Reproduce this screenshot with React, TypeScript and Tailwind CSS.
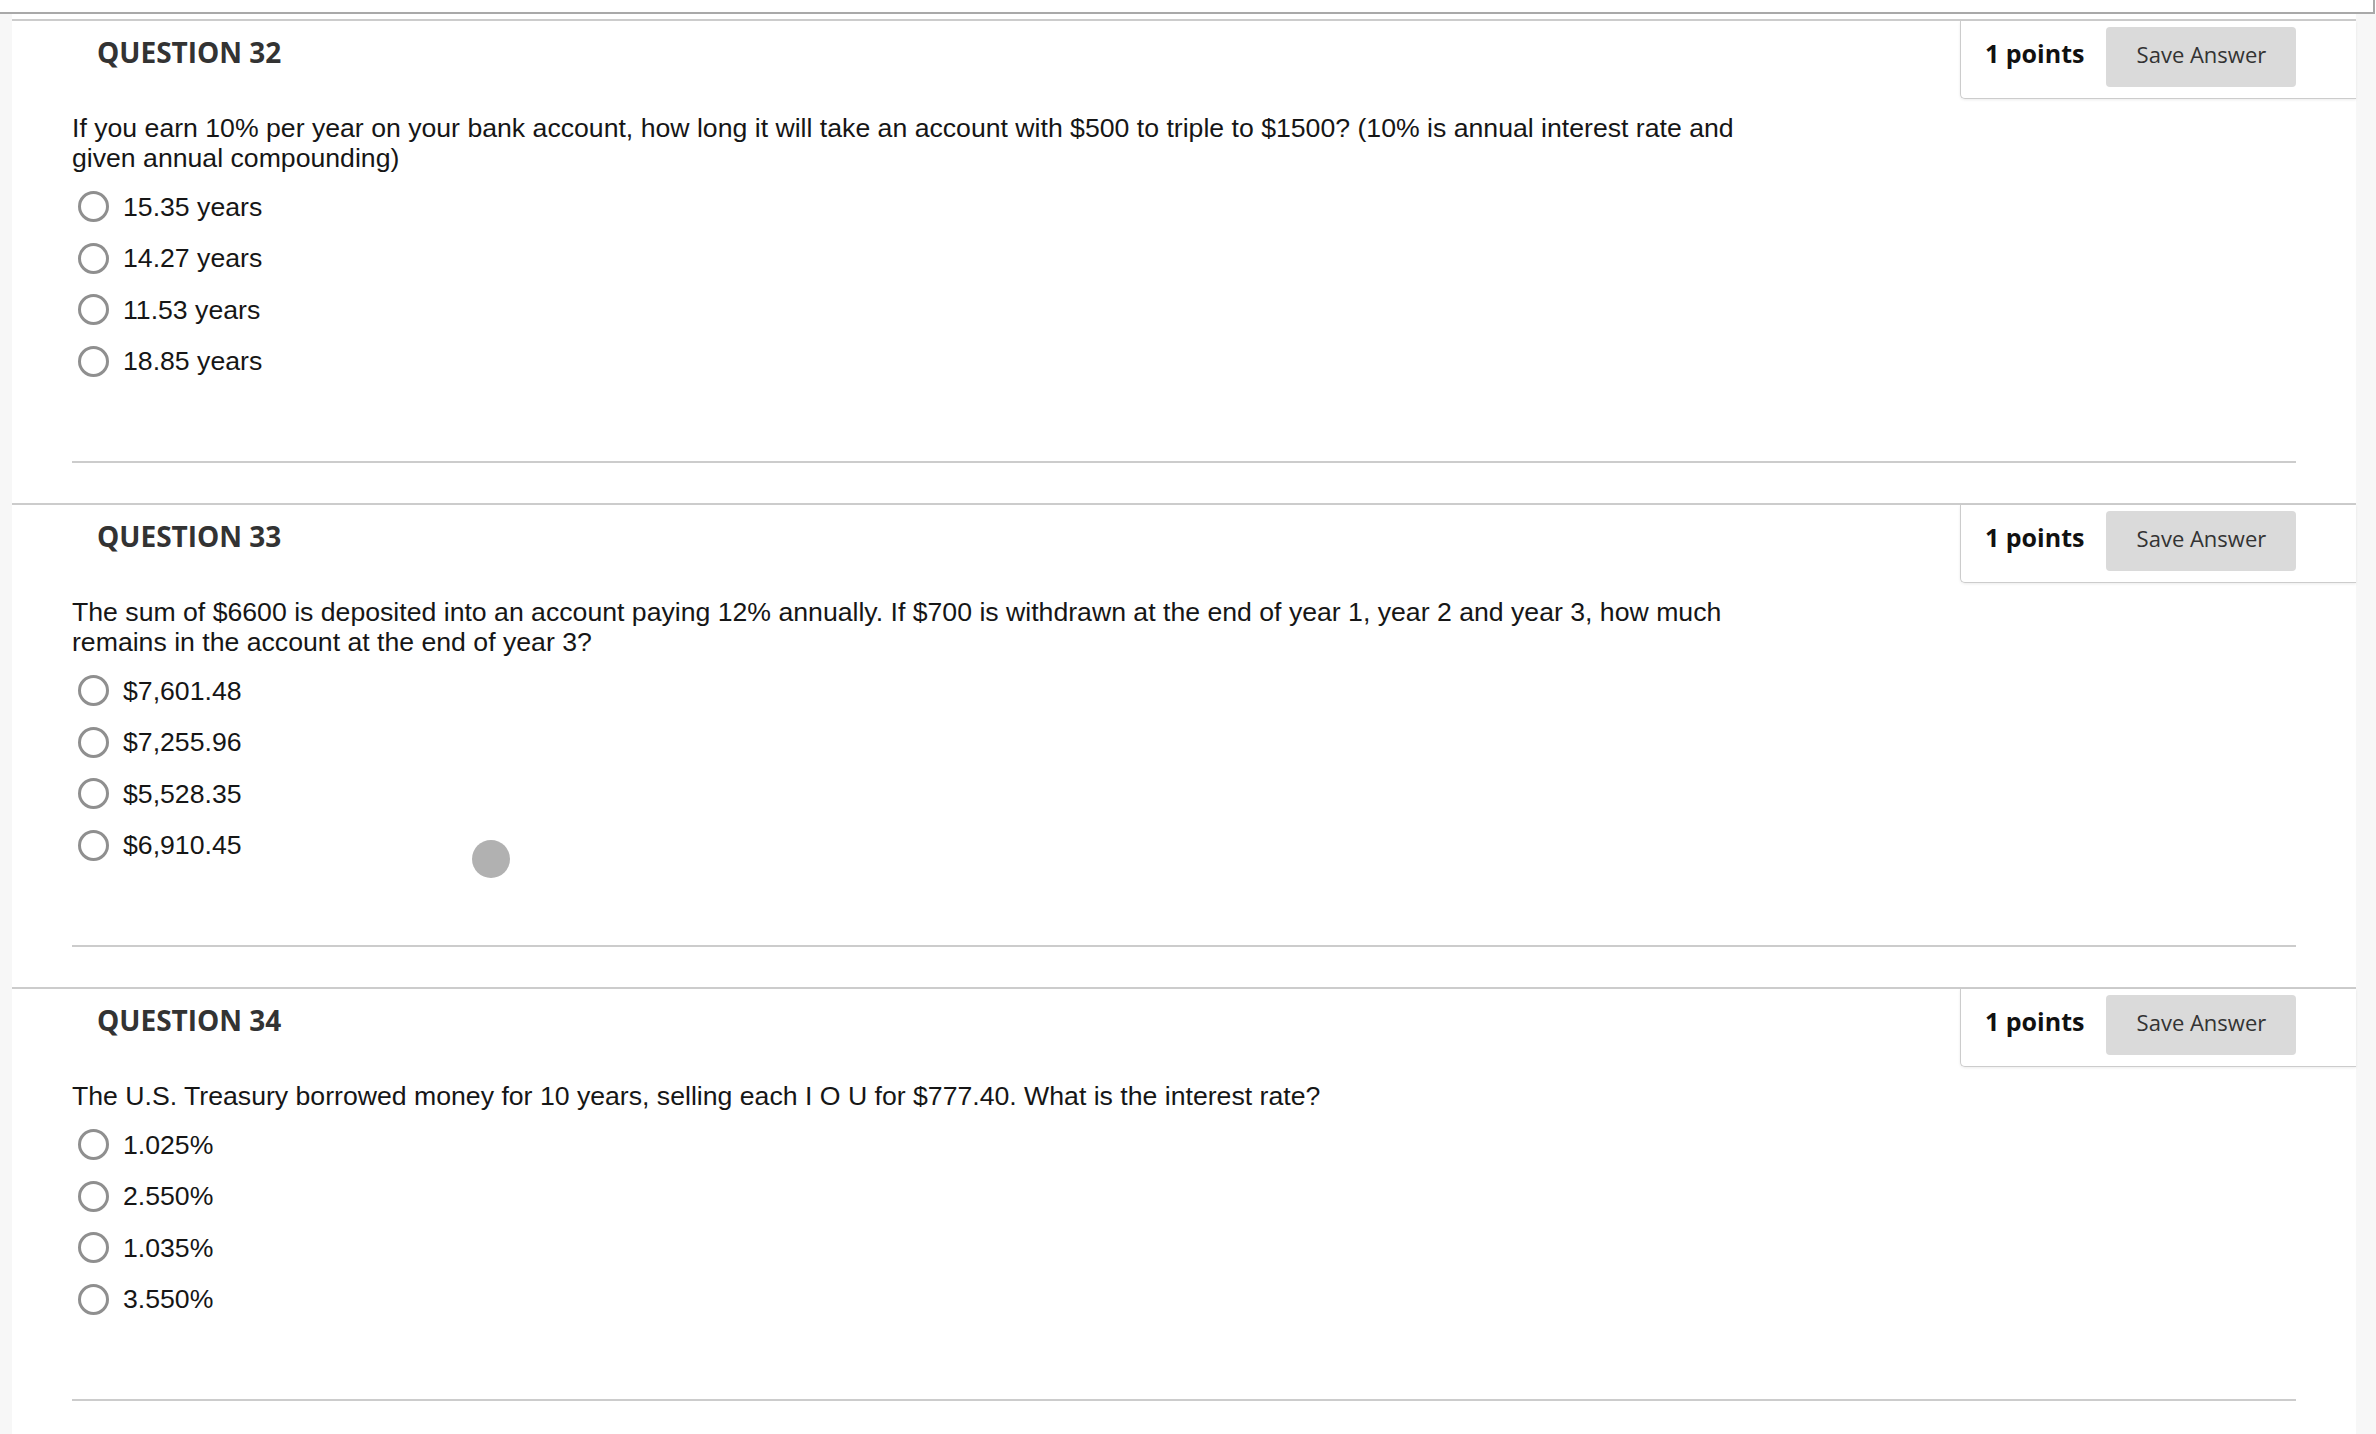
import React from "react";

type Q = { n: number; text: string; options: string[] };

const questions: Q[] = [
  {
    n: 32,
    text: "If you earn 10% per year on your bank account, how long it will take an account with $500 to triple to $1500? (10% is annual interest rate and given annual compounding)",
    options: ["15.35 years", "14.27 years", "11.53 years", "18.85 years"],
  },
  {
    n: 33,
    text: "The sum of $6600 is deposited into an account paying 12% annually. If $700 is withdrawn at the end of year 1, year 2 and year 3, how much remains in the account at the end of year 3?",
    options: ["$7,601.48", "$7,255.96", "$5,528.35", "$6,910.45"],
  },
  {
    n: 34,
    text: "The U.S. Treasury borrowed money for 10 years, selling each I O U for $777.40. What is the interest rate?",
    options: ["1.025%", "2.550%", "1.035%", "3.550%"],
  },
];

const openSans = { fontFamily: '"Open Sans", "Noto Sans", sans-serif' };
const arial = { fontFamily: '"Liberation Sans", Arial, sans-serif' };

function Question({ q }: { q: Q }) {
  return (
    <div className="border-t-2 border-[#cccccc]">
      <div className="flex justify-between items-start">
        <div
          className="pl-[85px] mt-[12px] text-[28px] font-bold text-[#333333] leading-[38px]"
          style={openSans}
        >
          QUESTION {q.n}
        </div>
        <div className="flex items-start w-[396px] pl-[24px] pt-[6px] pb-[11px] border-l border-b border-[#cccccc] rounded-bl-[5px] shadow-[0_1px_3px_rgba(0,0,0,0.08)] bg-white">
          <span
            className="mt-[9px] text-[25px] font-bold text-[#111111] leading-[34px] whitespace-nowrap"
            style={openSans}
          >
            1 points
          </span>
          <button
            className="ml-[22px] w-[190px] h-[60px] bg-[#dadada] rounded-[4px] flex items-center justify-center pb-[7px] text-[22px] text-[#333333] leading-[30px]"
            style={openSans}
          >
            Save Answer
          </button>
        </div>
      </div>
      <div
        className="ml-[60px] mt-[14px] w-[1700px] text-[26.65px] text-[#161616] leading-[30px]"
        style={arial}
      >
        {q.text}
      </div>
      <div className="mt-[8px] ml-[60px] flex flex-col">
        {q.options.map((o) => (
          <div key={o} className="h-[51.5px] flex items-center">
            <span className="ml-[6px] w-[31px] h-[31px] rounded-full border-[3px] border-[#8f8f8f] bg-white shrink-0" />
            <span
              className="ml-[14px] text-[26.65px] text-[#161616] leading-[30px]"
              style={arial}
            >
              {o}
            </span>
          </div>
        ))}
      </div>
      <div className="mt-[74px] mx-[60px] h-[2px] bg-[#cccccc]" />
      <div className="h-[40px]" />
    </div>
  );
}

export default function App() {
  return (
    <div className="relative w-[2376px] h-[1434px] overflow-hidden bg-white">
      <div className="h-[14px] w-[2375px] border-b-2 border-r-2 border-[#a9a9a9]" />
      <div className="flex bg-[#f7f7f7] h-[1420px]">
        <div className="w-[12px] shrink-0" />
        <div className="flex-1 bg-white pt-[5px]">
          {questions.map((q) => (
            <Question key={q.n} q={q} />
          ))}
        </div>
        <div className="w-[20px] shrink-0" />
      </div>
      <div className="absolute left-[472px] top-[840px] w-[38px] h-[38px] rounded-full bg-[#b1b1b1]" />
    </div>
  );
}
